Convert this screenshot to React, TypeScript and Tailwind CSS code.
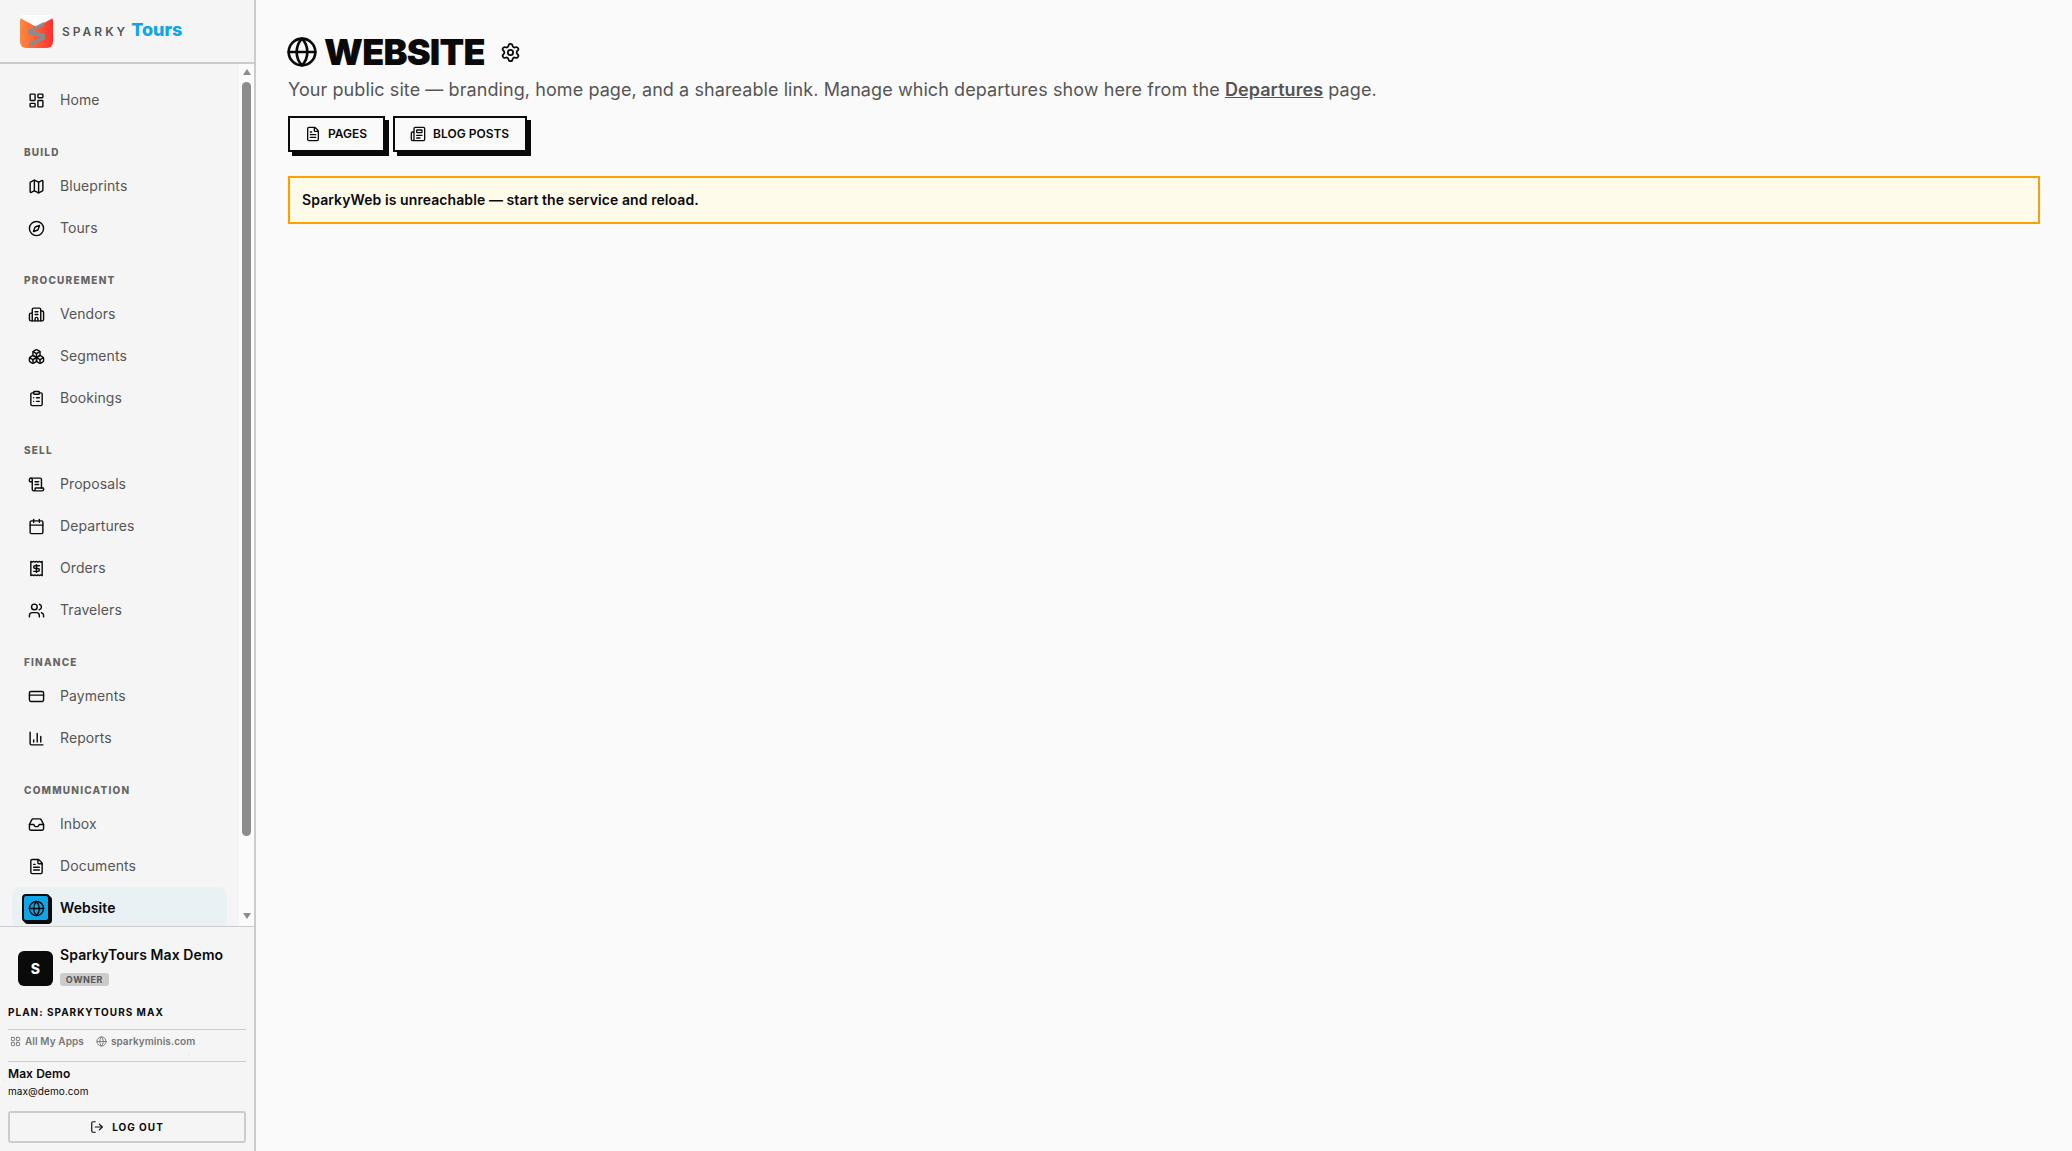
import React from "react";
import {
  LayoutDashboard, Map, Compass, Building2, Boxes, ClipboardList, ScrollText,
  Calendar, Receipt, Users, CreditCard, ChartColumn, Inbox, FileText, Globe,
  Settings, Newspaper, LogOut, LayoutGrid,
} from "lucide-react";

type Item = { label: string; icon: React.ComponentType<{ className?: string }>; active?: boolean };
const sections: { title?: string; items: Item[] }[] = [
  { items: [{ label: "Home", icon: LayoutDashboard }] },
  { title: "Build", items: [{ label: "Blueprints", icon: Map }, { label: "Tours", icon: Compass }] },
  { title: "Procurement", items: [{ label: "Vendors", icon: Building2 }, { label: "Segments", icon: Boxes }, { label: "Bookings", icon: ClipboardList }] },
  { title: "Sell", items: [{ label: "Proposals", icon: ScrollText }, { label: "Departures", icon: Calendar }, { label: "Orders", icon: Receipt }, { label: "Travelers", icon: Users }] },
  { title: "Finance", items: [{ label: "Payments", icon: CreditCard }, { label: "Reports", icon: ChartColumn }] },
  { title: "Communication", items: [{ label: "Inbox", icon: Inbox }, { label: "Documents", icon: FileText }, { label: "Website", icon: Globe, active: true }] },
];

function Logo() {
  return (
    <svg width="33" height="33" viewBox="0 0 33 33" className="shrink-0">
      <defs>
        <linearGradient id="lg" x1="0" x2="1" y1="0" y2="0">
          <stop offset="0" stopColor="#ff8a3d" />
          <stop offset="1" stopColor="#ff2f2f" />
        </linearGradient>
      </defs>
      <rect x="0" y="0" width="33" height="33" rx="6" fill="url(#lg)" />
      <path d="M3 0H30Q32 0 33 3L16.500 12 0 3Q1 0 3 0Z" fill="#ffffff" />
      <path d="M24 7 8 15V19L20 22 9 28V32L25 24V19L13 16 24 11Z" fill="#8b8b8b" />
    </svg>
  );
}

function NavItem({ item }: { item: Item }) {
  const Icon = item.icon;
  return (
    <div className={`h-[42px] flex items-center pl-2.5 gap-2.5 rounded-lg shrink-0 ${item.active ? "bg-[#e9f1f5]" : ""}`}>
      <div className={`w-[28px] h-[28px] flex items-center justify-center rounded-[4px] text-[#0a0a0a] ${item.active ? "bg-[#0ea5e9] border-2 border-[#0a0a0a] shadow-[2px_2px_0_#0a0a0a]" : ""}`}>
        <Icon className="w-[17px] h-[17px] shrink-0" />
      </div>
      <span className={`text-sm ${item.active ? "font-semibold text-[#0a0a0a]" : "text-[#555555]"}`}>{item.label}</span>
    </div>
  );
}

function Scrollbar() {
  return (
    <div className="w-[15px] shrink-0 bg-[#fbfbfb] flex flex-col items-center pt-[5px] pb-[7px]">
      <div className="w-0 h-0 border-x-[4.5px] border-x-transparent border-b-[6px] border-b-[#8c8c8c]" />
      <div className="mt-[7px] w-[9px] h-[754px] rounded-full bg-[#8c8c8c]" />
      <div className="mt-auto w-0 h-0 border-x-[4.5px] border-x-transparent border-t-[6px] border-t-[#8c8c8c]" />
    </div>
  );
}

export default function App() {
  return (
    <div className="h-screen w-full flex overflow-hidden bg-[#fafafa] font-['Inter',sans-serif] text-[#0a0a0a] tracking-[0.005em]">
      <aside className="w-[256px] shrink-0 h-full flex flex-col bg-[#f5f5f5] border-r-2 border-[#cccccc]">
        <header className="h-[64px] shrink-0 flex items-center pl-[20px] gap-[9px] border-b-2 border-[#cccccc]">
          <Logo />
          <div className="flex items-baseline gap-[3px]">
            <span className="text-[12px] font-semibold tracking-[3px] text-[#555555]">SPARKY</span>
            <span className="text-[18px] font-extrabold text-[#0ea5e9] leading-none tracking-normal">Tours</span>
          </div>
        </header>
        <div className="flex-1 min-h-0 flex">
          <nav className="flex-1 min-w-0 overflow-hidden px-3 pt-[15px] flex flex-col">
            {sections.map((s, i) => (
              <div key={i} className="flex flex-col shrink-0">
                {s.title && (
                  <div className="mt-6 mb-[5px] h-[15px] leading-[15px] pl-3 text-[10px] font-extrabold uppercase tracking-[1.2px] text-[#666666]">{s.title}</div>
                )}
                {s.items.map((it) => <NavItem key={it.label} item={it} />)}
              </div>
            ))}
          </nav>
          <Scrollbar />
        </div>
        <footer className="shrink-0 h-[225px] border-t border-[#cccccc] px-2 flex flex-col">
          <div className="flex gap-[7px] pl-2.5 pt-[19px]">
            <div className="w-[35px] h-[35px] rounded-md bg-[#0a0a0a] text-white flex items-center justify-center text-sm font-extrabold mt-[5px]">S</div>
            <div className="flex flex-col">
              <div className="text-sm font-semibold leading-[17px]">SparkyTours Max Demo</div>
              <div className="mt-[10px] w-[49px] h-[13px] rounded-[3px] bg-[#cccccc] text-[#555555] text-[9px] font-bold tracking-[0.6px] leading-[13px] text-center">OWNER</div>
            </div>
          </div>
          <div className="mt-[19px] text-[10px] font-bold tracking-[1px] leading-[14px]">PLAN: SPARKYTOURS MAX</div>
          <div className="mt-[10px] border-t border-[#cccccc] h-[32px] pb-[8px] flex items-center gap-3 text-[10px] font-semibold text-[#777777]">
            <span className="flex items-center gap-1 ml-[1px]"><LayoutGrid className="w-[11px] h-[11px] ml-[1px]" />All My Apps</span>
            <span className="flex items-center gap-1"><Globe className="w-[11px] h-[11px]" />sparkyminis.com</span>
          </div>
          <div className="border-t border-[#cccccc] pt-[4px]">
            <div className="text-xs font-semibold leading-[16px]">Max Demo</div>
            <div className="text-[10px] leading-[14px] mt-[2px]">max@demo.com</div>
          </div>
          <button className="mt-[13px] h-[32px] w-full flex items-center justify-center gap-2 border-2 border-[#cccccc] rounded-[3px] text-[10px] font-bold tracking-[1px]">
            <LogOut className="w-[14px] h-[14px]" />LOG OUT
          </button>
        </footer>
      </aside>
      <main className="flex-1 min-w-0 px-8 pt-[30px] flex flex-col items-stretch">
        <div className="flex items-center h-[44px]">
          <Globe className="w-8 h-8 -ml-[2px]" />
          <h1 className="ml-[6px] text-[36px] leading-[44px] font-black uppercase tracking-[-0.8px]">Website</h1>
          <Settings className="ml-[15px] w-[21px] h-[21px]" />
        </div>
        <p className="mt-[2px] text-lg leading-[28px] text-[#555555]">
          Your public site — branding, home page, and a shareable link. Manage which departures show here from the <span className="font-semibold underline">Departures</span> page.
        </p>
        <div className="mt-[12px] flex gap-2">
          <button className="h-9 pl-[15px] pr-4 flex items-center gap-[7px] border-2 border-[#0a0a0a] bg-[#fafafa] shadow-[4px_4px_0_#0a0a0a] text-xs font-semibold uppercase tracking-normal">
            <FileText className="w-4 h-4" />Pages
          </button>
          <button className="h-9 pl-[15px] pr-4 flex items-center gap-[7px] border-2 border-[#0a0a0a] bg-[#fafafa] shadow-[4px_4px_0_#0a0a0a] text-xs font-semibold uppercase tracking-normal">
            <Newspaper className="w-4 h-4" />Blog Posts
          </button>
        </div>
        <div className="mt-6 h-[48px] border-2 border-[#ff9f00] bg-[#fffbeb] flex items-center px-3 text-sm font-semibold">
          SparkyWeb is unreachable — start the service and reload.
        </div>
      </main>
    </div>
  );
}
